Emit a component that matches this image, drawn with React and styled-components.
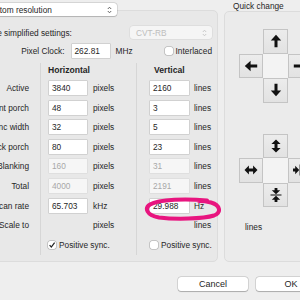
import React from "react";
import styled, { createGlobalStyle } from "styled-components";

const GlobalStyle = createGlobalStyle`
  html, body {
    margin: 0;
    padding: 0;
    background: #eeeeee;
  }
  body {
    font-family: "Liberation Sans", Arial, sans-serif;
    color: #262626;
  }
`;

//rows of the timing table
const rows = [
    { label: "Active", h: "3840", v: "2160" },
    { label: "Front porch", h: "48", v: "3" },
    { label: "Sync width", h: "32", v: "5" },
    { label: "Back porch", h: "80", v: "23" },
    { label: "Blanking", h: "160", v: "31", disabled: true },
    { label: "Total", h: "4000", v: "2191", disabled: true },
    { label: "Scan rate", h: "65.703", v: "29.988", hu: "kHz", vu: "Hz", mark: true },
    { label: "Scale to", empty: true },
];

const Chevrons = ({ light }) => (
    <svg width="5" height="8" viewBox="0 0 5 8">
        <path
            d="M0.8 3 L2.5 1.2 L4.2 3 M0.8 5 L2.5 6.8 L4.2 5"
            fill="none"
            stroke={light ? "#c4c4c4" : "#555"}
            strokeWidth="0.9"
        />
    </svg>
);

const Check = ({ checked }) => (
    <CheckBox>
        {checked && (
            <svg width="8" height="8" viewBox="0 0 8 8">
                <path d="M1.6 4.2 L3.3 6 L6.6 1.6" fill="none" stroke="#222" strokeWidth="1.2" />
            </svg>
        )}
    </CheckBox>
);

//arrow glyphs for the quick change pads
const arrows = {
    up: "M7 0.8 L12.2 6.6 L8.5 6.6 L8.5 13.2 L5.5 13.2 L5.5 6.6 L1.8 6.6 Z",
    down: "M7 13.2 L12.2 7.4 L8.5 7.4 L8.5 0.8 L5.5 0.8 L5.5 7.4 L1.8 7.4 Z",
    left: "M0.8 7 L6.6 1.8 L6.6 5.5 L13.2 5.5 L13.2 8.5 L6.6 8.5 L6.6 12.2 Z",
    right: "M13.2 7 L7.4 1.8 L7.4 5.5 L0.8 5.5 L0.8 8.5 L7.4 8.5 L7.4 12.2 Z",
    vgrow: "M7 0.5 L11.6 4.9 L8.5 4.9 L8.5 9.1 L11.6 9.1 L7 13.5 L2.4 9.1 L5.5 9.1 L5.5 4.9 L2.4 4.9 Z",
    hgrow: "M0.5 7 L4.9 2.4 L4.9 5.5 L9.1 5.5 L9.1 2.4 L13.5 7 L9.1 11.6 L9.1 8.5 L4.9 8.5 L4.9 11.6 Z",
    hshrink: "M6.2 7 L2.2 2.8 L2.2 5.6 L0 5.6 L0 8.4 L2.2 8.4 L2.2 11.2 Z M7.8 7 L11.8 2.8 L11.8 5.6 L14 5.6 L14 8.4 L11.8 8.4 L11.8 11.2 Z M6.6 1.5 L7.4 1.5 L7.4 12.5 L6.6 12.5 Z",
    vshrink: "M7 6.2 L2.8 2.2 L5.6 2.2 L5.6 0 L8.4 0 L8.4 2.2 L11.2 2.2 Z M7 7.8 L2.8 11.8 L5.6 11.8 L5.6 14 L8.4 14 L8.4 11.8 L11.2 11.8 Z M1.5 6.4 L12.5 6.4 L12.5 7.6 L1.5 7.6 Z",
};

const Arrow = ({ d }) => (
    <svg width="14" height="14" viewBox="0 0 14 14">
        <path d={d} fill="#111" />
    </svg>
);

const Pad = ({ up, left, right, down }) => (
    <PadGrid>
        <PadCell $area="up"><Arrow d={arrows[up]} /></PadCell>
        <PadCell $area="left"><Arrow d={arrows[left]} /></PadCell>
        <PadCenter />
        <PadCell $area="right"><Arrow d={arrows[right]} /></PadCell>
        <PadCell $area="down"><Arrow d={arrows[down]} /></PadCell>
    </PadGrid>
);

export default function App() {
    return (
        <Screen>
            <GlobalStyle />
            <Window>
                <TopRow>
                    <MainGroup>
                        <ModePopup>
                            <span>Custom resolution</span>
                            <Chevrons />
                        </ModePopup>
                        <MainBox>
                            <SimpleRow>
                                <Text>Use simplified settings:</Text>
                                <CvtPopup>
                                    <span>CVT-RB</span>
                                    <Chevrons light />
                                </CvtPopup>
                            </SimpleRow>
                            <ClockRow>
                                <ClockLabel>Pixel Clock:</ClockLabel>
                                <Field $w={38}>262.81</Field>
                                <Text>MHz</Text>
                                <CheckLine $ml={26}>
                                    <Check />
                                    <Text>Interlaced</Text>
                                </CheckLine>
                            </ClockRow>
                            <Table>
                                <LabelCol>
                                    <HeadCell />
                                    {rows.map((r) => (
                                        <LabelCell key={r.label}>{r.label}</LabelCell>
                                    ))}
                                    <LabelCell />
                                </LabelCol>
                                <DataCol $pad={8} $gap={6}>
                                    <HeadCell $pad={7}>Horizontal</HeadCell>
                                    {rows.map((r) => (
                                        <Cell key={r.label}>
                                            {r.empty ? (
                                                <Spacer $w={38} />
                                            ) : (
                                                <Field $w={38} $disabled={r.disabled}>{r.h}</Field>
                                            )}
                                            <Text>{r.hu || "pixels"}</Text>
                                        </Cell>
                                    ))}
                                    <Cell>
                                        <CheckLine $ml={-1}>
                                            <Check checked />
                                            <Text>Positive sync.</Text>
                                        </CheckLine>
                                    </Cell>
                                </DataCol>
                                <DataCol $pad={13} $gap={5}>
                                    <HeadCell $pad={12}>Vertical</HeadCell>
                                    {rows.map((r) => (
                                        <Cell key={r.label}>
                                            {r.empty ? (
                                                <Spacer $w={39} />
                                            ) : (
                                                <Field $w={39} $disabled={r.disabled}>{r.v}</Field>
                                            )}
                                            <Text>{r.vu || "lines"}</Text>
                                            {r.mark && (
                                                <Mark width="80" height="24" viewBox="0 0 80 24">
                                                    <path
                                                        d="M64 3.5 C44 1.5 16 2 7 7.5 C1.5 11 3 18 16 20.5 C32 22.5 60 22 71 18.5 C79 15.5 77 8 68 5.5 C64 4.5 60 4 56 4"
                                                        fill="none"
                                                        stroke="#e8157f"
                                                        strokeWidth="4"
                                                        strokeLinecap="round"
                                                    />
                                                </Mark>
                                            )}
                                        </Cell>
                                    ))}
                                    <Cell>
                                        <CheckLine $ml={0}>
                                            <Check />
                                            <Text>Positive sync.</Text>
                                        </CheckLine>
                                    </Cell>
                                </DataCol>
                            </Table>
                        </MainBox>
                    </MainGroup>
                    <QuickGroup>
                        <BoxTitle>Quick change</BoxTitle>
                        <QuickBox>
                            <Pad up="up" left="left" right="right" down="down" />
                            <Pad up="vgrow" left="hgrow" right="hshrink" down="vshrink" />
                            <QuickNote>lines</QuickNote>
                        </QuickBox>
                    </QuickGroup>
                </TopRow>
                <ButtonRow>
                    <Button>Cancel</Button>
                    <Button>OK</Button>
                </ButtonRow>
            </Window>
        </Screen>
    );
}

const Screen = styled.div`
    width: 300px;
    height: 300px;
    overflow: hidden;
    background: #eeeeee;
`;
const Window = styled.div`
    display: flex;
    flex-direction: column;
    margin-left: -60px;
    width: 440px;
    padding-top: 3px;
    font-size: 8.3px;
`;
const TopRow = styled.div`
    display: flex;
    gap: 6px;
    align-items: flex-start;
`;
const MainGroup = styled.div`
    display: flex;
    flex-direction: column;
    width: 278px;
`;
const Popup = styled.div`
    box-sizing: border-box;
    height: 13px;
    display: flex;
    align-items: center;
    justify-content: space-between;
    border-radius: 3px;
    padding: 0 5px 0 7px;
`;
const ModePopup = styled(Popup)`
    position: relative;
    z-index: 1;
    margin-left: 38px;
    width: 139px;
    background: #fff;
    box-shadow: 0 0 0 0.5px rgba(0, 0, 0, 0.18), 0 0.5px 1px rgba(0, 0, 0, 0.15);
`;
const CvtPopup = styled(Popup)`
    width: 82px;
    padding-left: 6px;
    background: #f5f5f5;
    color: #bdbdbd;
    box-shadow: 0 0 0 0.5px rgba(0, 0, 0, 0.08);
`;
const Box = styled.div`
    box-sizing: border-box;
    height: 252px;
    background: #e8e8e8;
    border: 1px solid #dcdcdc;
    border-radius: 5px;
`;
const MainBox = styled(Box)`
    margin-top: -6px;
    padding: 15px 5px 0 0;
    display: flex;
    flex-direction: column;
`;
const SimpleRow = styled.div`
    display: flex;
    align-items: center;
    justify-content: space-between;
    padding-left: 46px;
`;
const ClockRow = styled.div`
    display: flex;
    align-items: center;
    gap: 6px;
    margin-top: 5px;
`;
const ClockLabel = styled.span`
    width: 128px;
    text-align: right;
    margin-right: 1px;
`;
const Text = styled.span`
    white-space: nowrap;
`;
const Field = styled.div`
    box-sizing: border-box;
    width: ${(p) => p.$w}px;
    height: 14px;
    line-height: 14px;
    padding-left: 3px;
    background: ${(p) => (p.$disabled ? "#f6f6f6" : "#fff")};
    color: ${(p) => (p.$disabled ? "#a8a8a8" : "#262626")};
    box-shadow: 0 0 0 0.5px ${(p) => (p.$disabled ? "rgba(0,0,0,0.07)" : "rgba(0,0,0,0.2)")};
    flex-shrink: 0;
`;
const Spacer = styled.div`
    width: ${(p) => p.$w}px;
    flex-shrink: 0;
`;
const CheckLine = styled.div`
    display: flex;
    align-items: center;
    gap: 3px;
    margin-left: ${(p) => p.$ml}px;
`;
const CheckBox = styled.div`
    box-sizing: border-box;
    width: 8px;
    height: 8px;
    background: #fff;
    border-radius: 2px;
    box-shadow: 0 0 0 0.5px rgba(0, 0, 0, 0.3);
    display: flex;
    align-items: center;
    justify-content: center;
`;
const Table = styled.div`
    display: flex;
    margin-top: 5px;
`;
const LabelCol = styled.div`
    display: flex;
    flex-direction: column;
    width: 99px;
`;
const DataCol = styled.div`
    display: flex;
    flex-direction: column;
    border-left: 1px solid #d6d6d6;
    width: 87px;
    padding-left: ${(p) => p.$pad}px;
    & > div {
        gap: ${(p) => p.$gap}px;
    }
    &:last-child {
        flex: 1;
    }
`;
const HeadCell = styled.div`
    height: 15.2px;
    line-height: 15px;
    font-size: 8.6px;
    font-weight: bold;
    margin-left: ${(p) => (p.$pad ? p.$pad - 8 : 0)}px;
`;
const Cell = styled.div`
    position: relative;
    height: 19.6px;
    display: flex;
    align-items: center;
`;
const LabelCell = styled(Cell)`
    justify-content: flex-end;
    padding-right: 11px;
    white-space: nowrap;
`;
const Mark = styled.svg`
    position: absolute;
    left: -7px;
    top: 1px;
`;
const QuickGroup = styled.div`
    display: flex;
    flex-direction: column;
`;
const BoxTitle = styled.div`
    margin: -2px 0 0 9px;
    height: 10px;
    line-height: 10px;
    white-space: nowrap;
`;
const QuickBox = styled(Box)`
    width: 103px;
    height: 251px;
    padding-top: 17px;
    display: flex;
    flex-direction: column;
    align-items: center;
    gap: 31px;
    background: #ebebeb;
`;
const PadGrid = styled.div`
    display: grid;
    grid-template-columns: repeat(3, 24.5px);
    grid-template-rows: repeat(3, 24.5px);
    grid-template-areas:
        ". up ."
        "left mid right"
        ". down .";
`;
const PadCell = styled.div`
    grid-area: ${(p) => p.$area};
    box-sizing: border-box;
    border: 1px solid #c4c4c4;
    background: linear-gradient(#ececec, #e2e2e2);
    display: flex;
    align-items: center;
    justify-content: center;
`;
const PadCenter = styled.div`
    grid-area: mid;
    background: #f3f3f3;
`;
const QuickNote = styled.div`
    align-self: flex-start;
    margin: -16px 0 0 20px;
`;
const ButtonRow = styled.div`
    display: flex;
    gap: 8px;
    margin: 15px 0 0 238px;
`;
const Button = styled.div`
    width: 70px;
    height: 14px;
    line-height: 14px;
    text-align: center;
    font-size: 9px;
    background: #fff;
    border-radius: 3px;
    box-shadow: 0 0 0 0.5px rgba(0, 0, 0, 0.2), 0 0.5px 1px rgba(0, 0, 0, 0.2);
`;
